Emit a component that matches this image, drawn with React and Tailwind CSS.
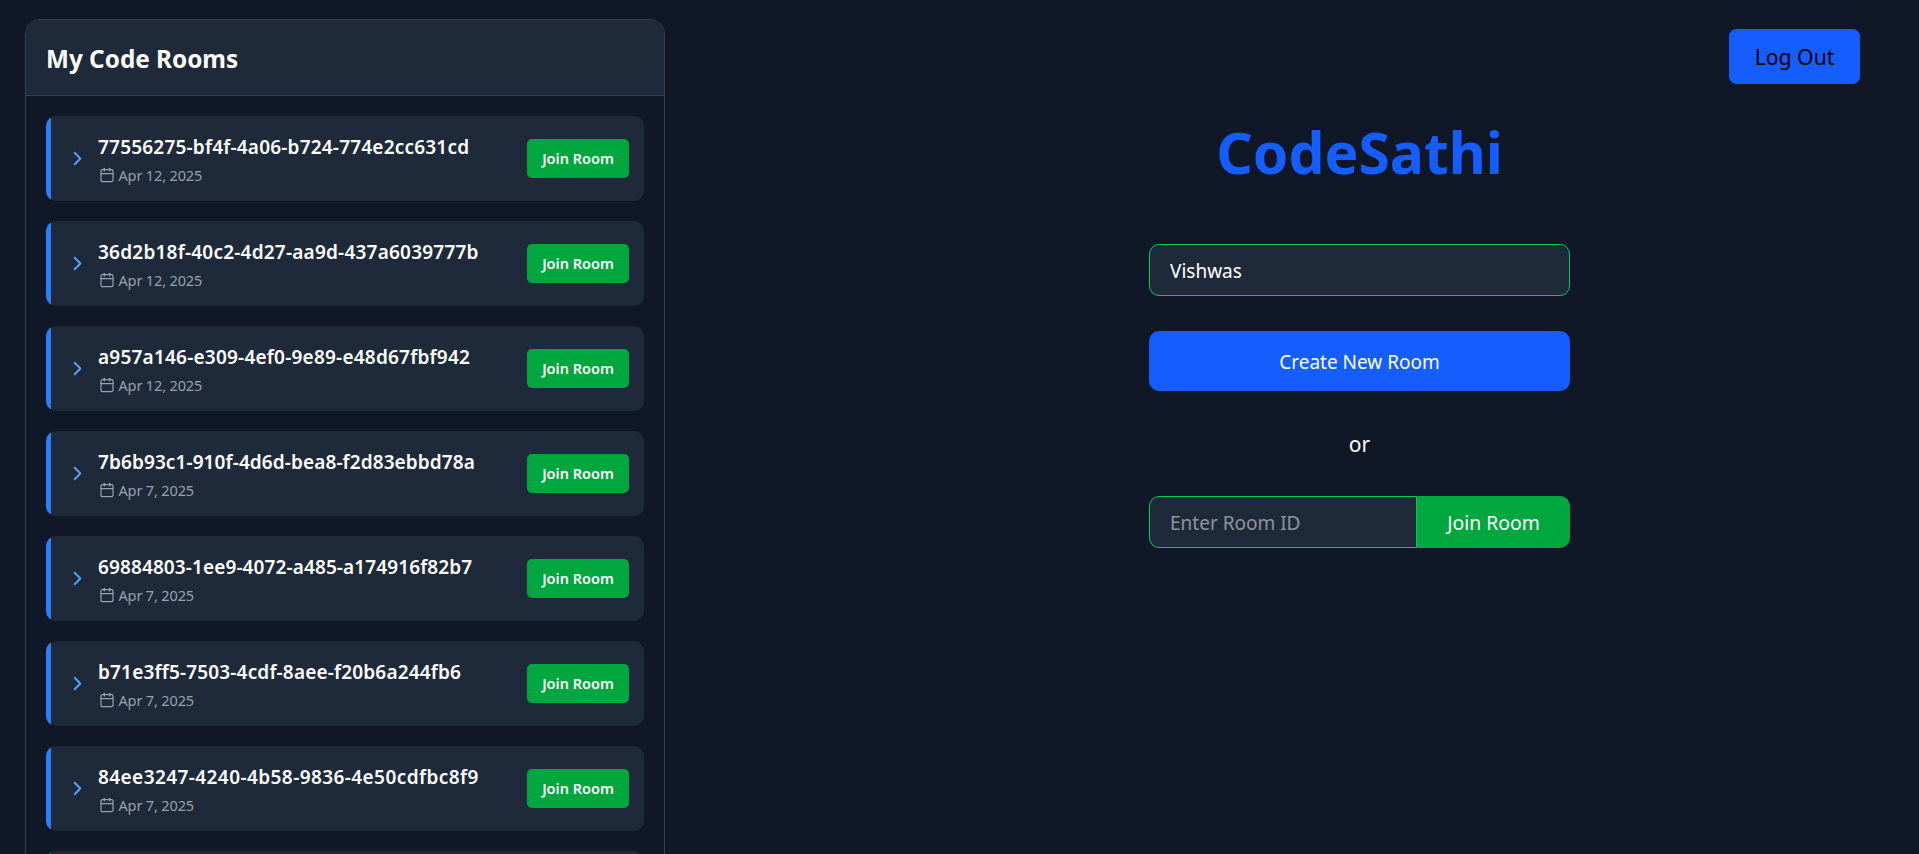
import { ChevronRight, Calendar } from 'lucide-react';

const rooms = [
  { id: '77556275-bf4f-4a06-b724-774e2cc631cd', date: 'Apr 12, 2025', tracking: 'tracking-[0.2px]' },
  { id: '36d2b18f-40c2-4d27-aa9d-437a6039777b', date: 'Apr 12, 2025', tracking: 'tracking-[0.22px]' },
  { id: 'a957a146-e309-4ef0-9e89-e48d67fbf942', date: 'Apr 12, 2025', tracking: 'tracking-[0.22px]' },
  { id: '7b6b93c1-910f-4d6d-bea8-f2d83ebbd78a', date: 'Apr 7, 2025', tracking: 'tracking-[0.1px]' },
  { id: '69884803-1ee9-4072-a485-a174916f82b7', date: 'Apr 7, 2025', tracking: 'tracking-[0.11px]' },
  { id: 'b71e3ff5-7503-4cdf-8aee-f20b6a244fb6', date: 'Apr 7, 2025', tracking: 'tracking-[0.17px]' },
  { id: '84ee3247-4240-4b58-9836-4e50cdfbc8f9', date: 'Apr 7, 2025', tracking: 'tracking-[0.42px]' },
];

function Card({ children }) {
  return (
    <li className="flex h-[85px] shrink-0 overflow-hidden rounded-[10px] bg-gray-800">
      <div className="w-[5px] shrink-0 bg-blue-500" />
      <div className="flex flex-1 items-center px-[15px]">{children}</div>
    </li>
  );
}

function RoomCard({ room }) {
  return (
    <Card>
      <ChevronRight className="mb-px size-[23px] shrink-0 text-blue-400" strokeWidth={2} />
      <div className="ml-[9px] flex flex-1 flex-col pt-[2px]">
        <span className={`h-[32px] text-[19px] leading-[30px] font-semibold whitespace-nowrap text-white ${room.tracking}`}>
          {room.id}
        </span>
        <span className="flex h-[23px] items-center gap-[4px] text-[14.5px] leading-[23px] tracking-[-0.15px] text-[#99a1af]">
          <Calendar className="mb-px ml-[0.5px] size-[16px]" strokeWidth={1.8} />
          {room.date}
        </span>
      </div>
      <button className="h-[39px] w-[102px] rounded-[5px] bg-green-600 pt-px text-[14.5px] font-semibold whitespace-nowrap text-white">
        Join Room
      </button>
    </Card>
  );
}

export default function App() {
  return (
    <div className="flex h-[854px] w-full overflow-hidden bg-gray-900 pt-[19px] pl-[25px] font-['Noto_Sans',sans-serif] text-white">
      <aside className="h-[900px] w-[640px] shrink-0 overflow-hidden rounded-t-[15px] border border-gray-700">
        <header className="flex h-[76px] items-center border-b border-gray-700 bg-gray-800 px-5 pt-[4px]">
          <h1 className="text-[24.3px] font-bold">My Code Rooms</h1>
        </header>
        <ul className="flex flex-col gap-5 px-5 pt-5">
          {rooms.map((room) => (
            <RoomCard key={room.id} room={room} />
          ))}
          <Card />
        </ul>
      </aside>
      <main className="flex flex-1 flex-col pt-[10px]">
        <button className="mr-[59px] h-[55px] w-[131px] self-end rounded-[7.5px] bg-blue-600 pt-px text-[21.2px] text-black">
          Log Out
        </button>
        <section className="ml-[484px] flex w-[421px] flex-col items-center">
          <h2 className="mt-[31px] h-[76px] text-[57px] leading-[75px] font-bold text-blue-600">CodeSathi</h2>
          <input
            defaultValue="Vishwas"
            className="mt-[53px] h-[52px] w-full rounded-[10px] border border-green-500 bg-gray-800 px-5 pt-[2px] text-[19px] outline-none"
          />
          <button className="mt-[35px] h-[60px] w-full rounded-[10px] bg-blue-600 pt-[2px] text-[19px]">
            Create New Room
          </button>
          <p className="mt-[36px] h-[34px] text-[21px] leading-[35px]">or</p>
          <div className="mt-[35px] flex h-[52px] w-full">
            <input
              placeholder="Enter Room ID"
              className="w-[268px] rounded-l-[10px] border border-green-500 bg-gray-800 px-5 pt-[2px] text-[19px] outline-none placeholder:text-white/50"
            />
            <button className="flex-1 rounded-r-[10px] bg-green-600 pt-[2px] text-[19.4px]">Join Room</button>
          </div>
        </section>
      </main>
    </div>
  );
}
